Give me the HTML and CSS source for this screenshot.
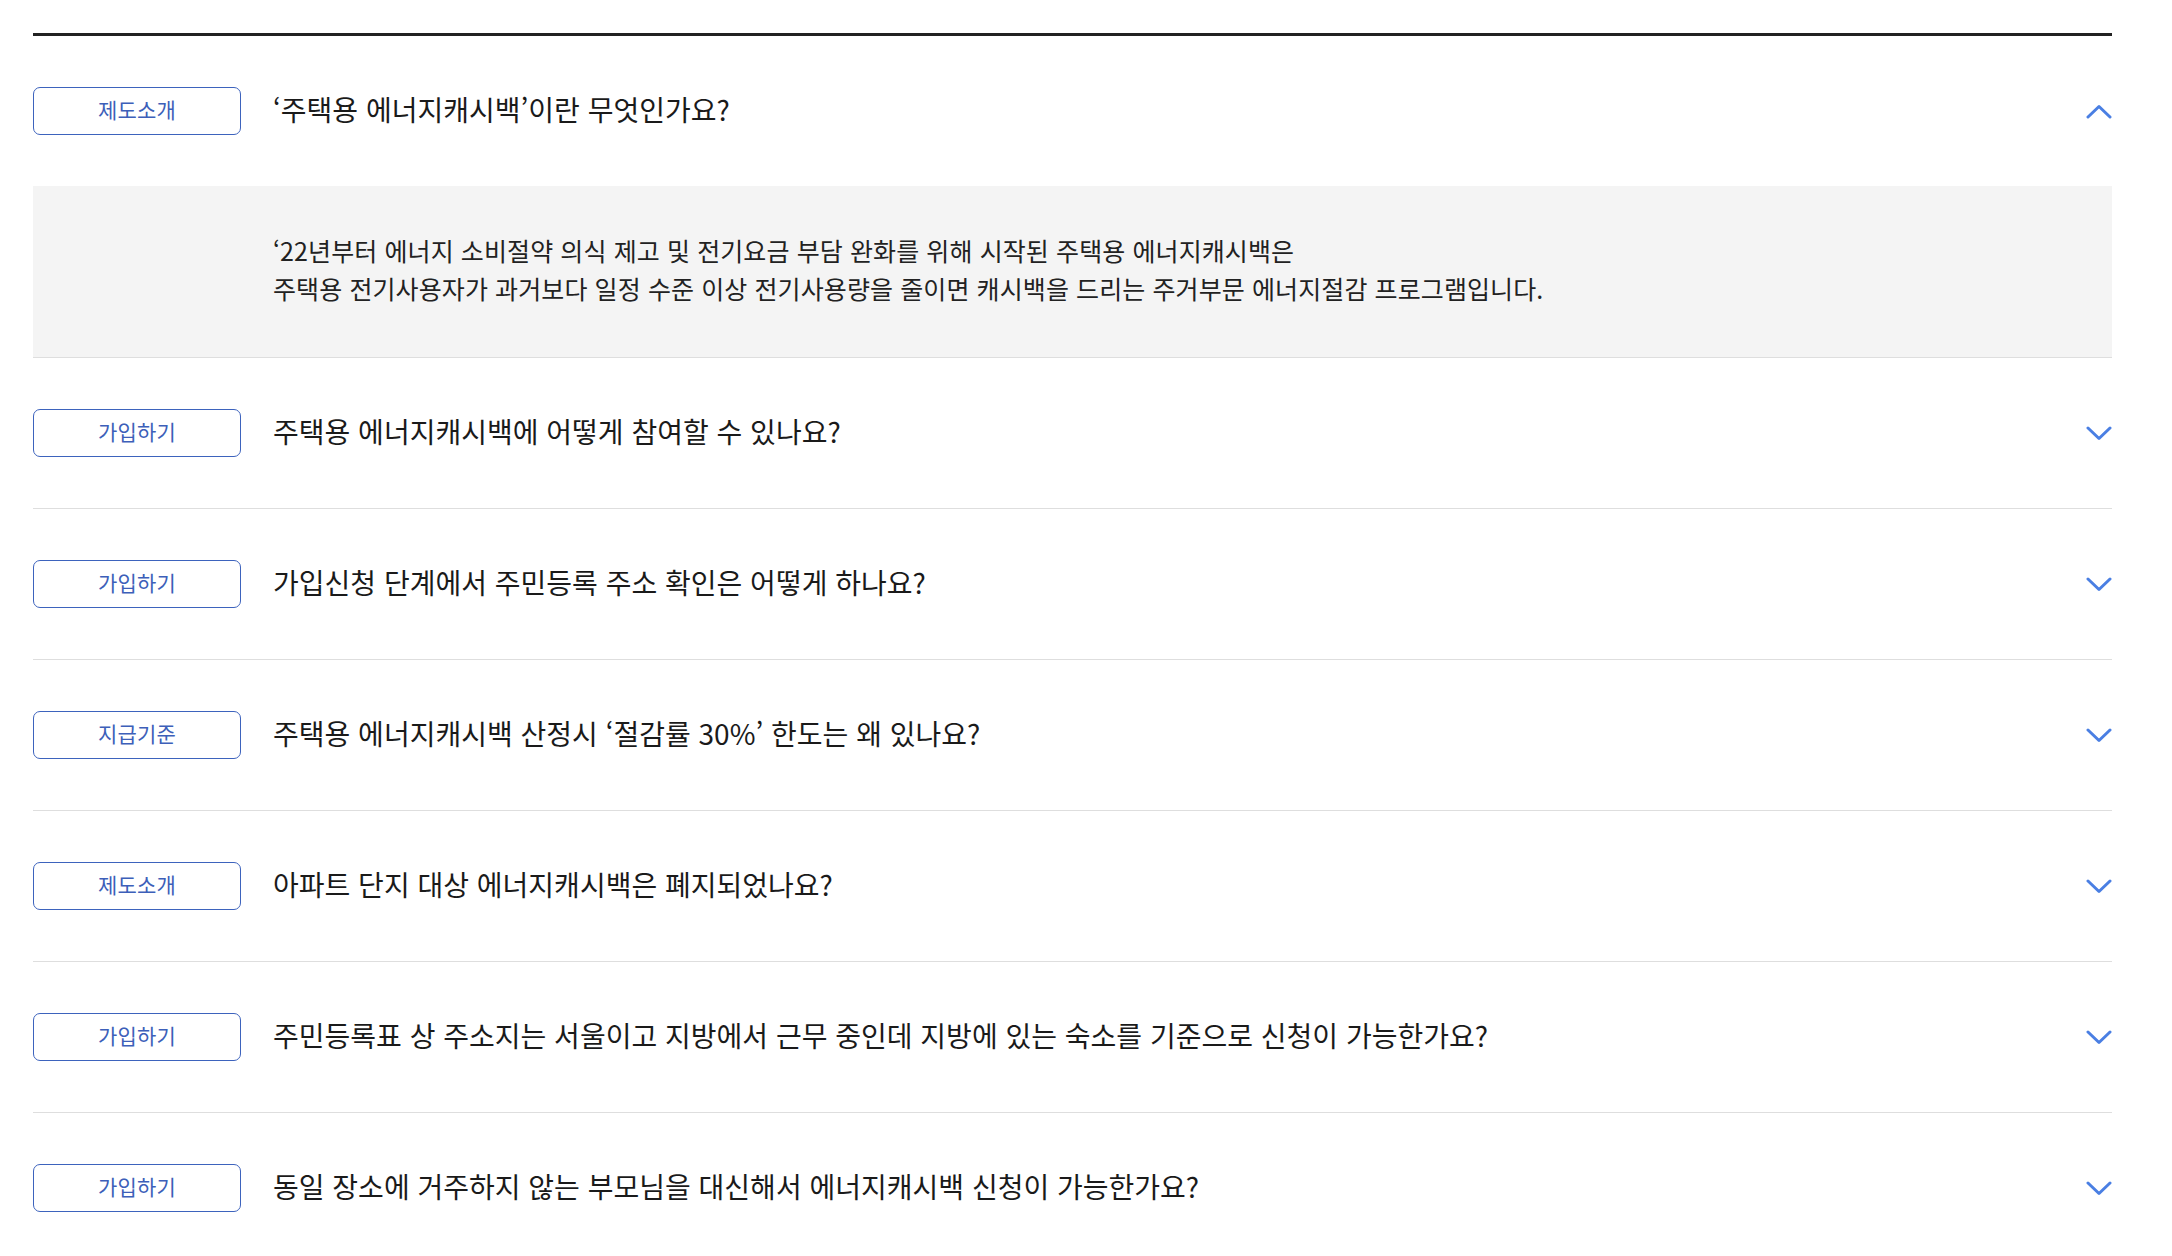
FILE: index.html
```html
<!DOCTYPE html>
<html lang="ko">
<head>
<meta charset="utf-8">
<link rel="stylesheet" href="styles.css">
</head>
<body>
<div class="faq">
  <div class="item open">
    <div class="head">
      <span class="tag">제도소개</span>
      <span class="q">‘주택용 에너지캐시백’이란 무엇인가요?</span>
      <svg class="chev" viewBox="0 0 26 15" width="26" height="15"><path d="M2 13 L13 2.5 L24 13" /></svg>
    </div>
    <div class="body">
      <p>‘22년부터 에너지 소비절약 의식 제고 및 전기요금 부담 완화를 위해 시작된 주택용 에너지캐시백은<br>주택용 전기사용자가 과거보다 일정 수준 이상 전기사용량을 줄이면 캐시백을 드리는 주거부문 에너지절감 프로그램입니다.</p>
    </div>
  </div>
  <div class="item">
    <div class="head">
      <span class="tag">가입하기</span>
      <span class="q">주택용 에너지캐시백에 어떻게 참여할 수 있나요?</span>
      <svg class="chev" viewBox="0 0 26 15" width="26" height="15"><path d="M2 2 L13 12.5 L24 2" /></svg>
    </div>
  </div>
  <div class="item">
    <div class="head">
      <span class="tag">가입하기</span>
      <span class="q">가입신청 단계에서 주민등록 주소 확인은 어떻게 하나요?</span>
      <svg class="chev" viewBox="0 0 26 15" width="26" height="15"><path d="M2 2 L13 12.5 L24 2" /></svg>
    </div>
  </div>
  <div class="item">
    <div class="head">
      <span class="tag">지급기준</span>
      <span class="q">주택용 에너지캐시백 산정시 ‘절감률 30%’ 한도는 왜 있나요?</span>
      <svg class="chev" viewBox="0 0 26 15" width="26" height="15"><path d="M2 2 L13 12.5 L24 2" /></svg>
    </div>
  </div>
  <div class="item">
    <div class="head">
      <span class="tag">제도소개</span>
      <span class="q">아파트 단지 대상 에너지캐시백은 폐지되었나요?</span>
      <svg class="chev" viewBox="0 0 26 15" width="26" height="15"><path d="M2 2 L13 12.5 L24 2" /></svg>
    </div>
  </div>
  <div class="item">
    <div class="head">
      <span class="tag">가입하기</span>
      <span class="q">주민등록표 상 주소지는 서울이고 지방에서 근무 중인데 지방에 있는 숙소를 기준으로 신청이 가능한가요?</span>
      <svg class="chev" viewBox="0 0 26 15" width="26" height="15"><path d="M2 2 L13 12.5 L24 2" /></svg>
    </div>
  </div>
  <div class="item">
    <div class="head">
      <span class="tag">가입하기</span>
      <span class="q">동일 장소에 거주하지 않는 부모님을 대신해서 에너지캐시백 신청이 가능한가요?</span>
      <svg class="chev" viewBox="0 0 26 15" width="26" height="15"><path d="M2 2 L13 12.5 L24 2" /></svg>
    </div>
  </div>
</div>
</body>
</html>
```
FILE: styles.css
```css
html, body {
  margin: 0;
  padding: 0;
  background: #fff;
}
body {
  font-family: "Noto Sans CJK KR", "Noto Sans", sans-serif;
  color: #222;
}
.faq {
  margin: 33px 60px 0 33px;
  border-top: 3px solid #222;
}
.item {
  border-bottom: 1px solid #dedede;
}
.head {
  height: 150px;
  display: flex;
  align-items: center;
}
.tag {
  flex: none;
  box-sizing: border-box;
  width: 208px;
  height: 48px;
  padding-bottom: 4px;
  border: 1px solid #3d63bd;
  border-radius: 7px;
  color: #3d5fb9;
  font-size: 21px;
  display: flex;
  align-items: center;
  justify-content: center;
  letter-spacing: 0.2px;
}
.q {
  flex: 1;
  margin-left: 32px;
  padding-bottom: 5px;
  font-size: 28px;
  color: #1a1a1a;
  letter-spacing: 0;
}
.chev {
  flex: none;
}
.chev path {
  fill: none;
  stroke: #4a7fe3;
  stroke-width: 3;
  stroke-linecap: round;
  stroke-linejoin: round;
}
.body {
  background: #f4f4f4;
  height: 171px;
  box-sizing: border-box;
  display: flex;
  align-items: center;
  padding-left: 240px;
  padding-bottom: 5px;
}
.body p {
  margin: 0;
  font-size: 25px;
  line-height: 38px;
  color: #222;
  letter-spacing: 0.1px;
}
```
